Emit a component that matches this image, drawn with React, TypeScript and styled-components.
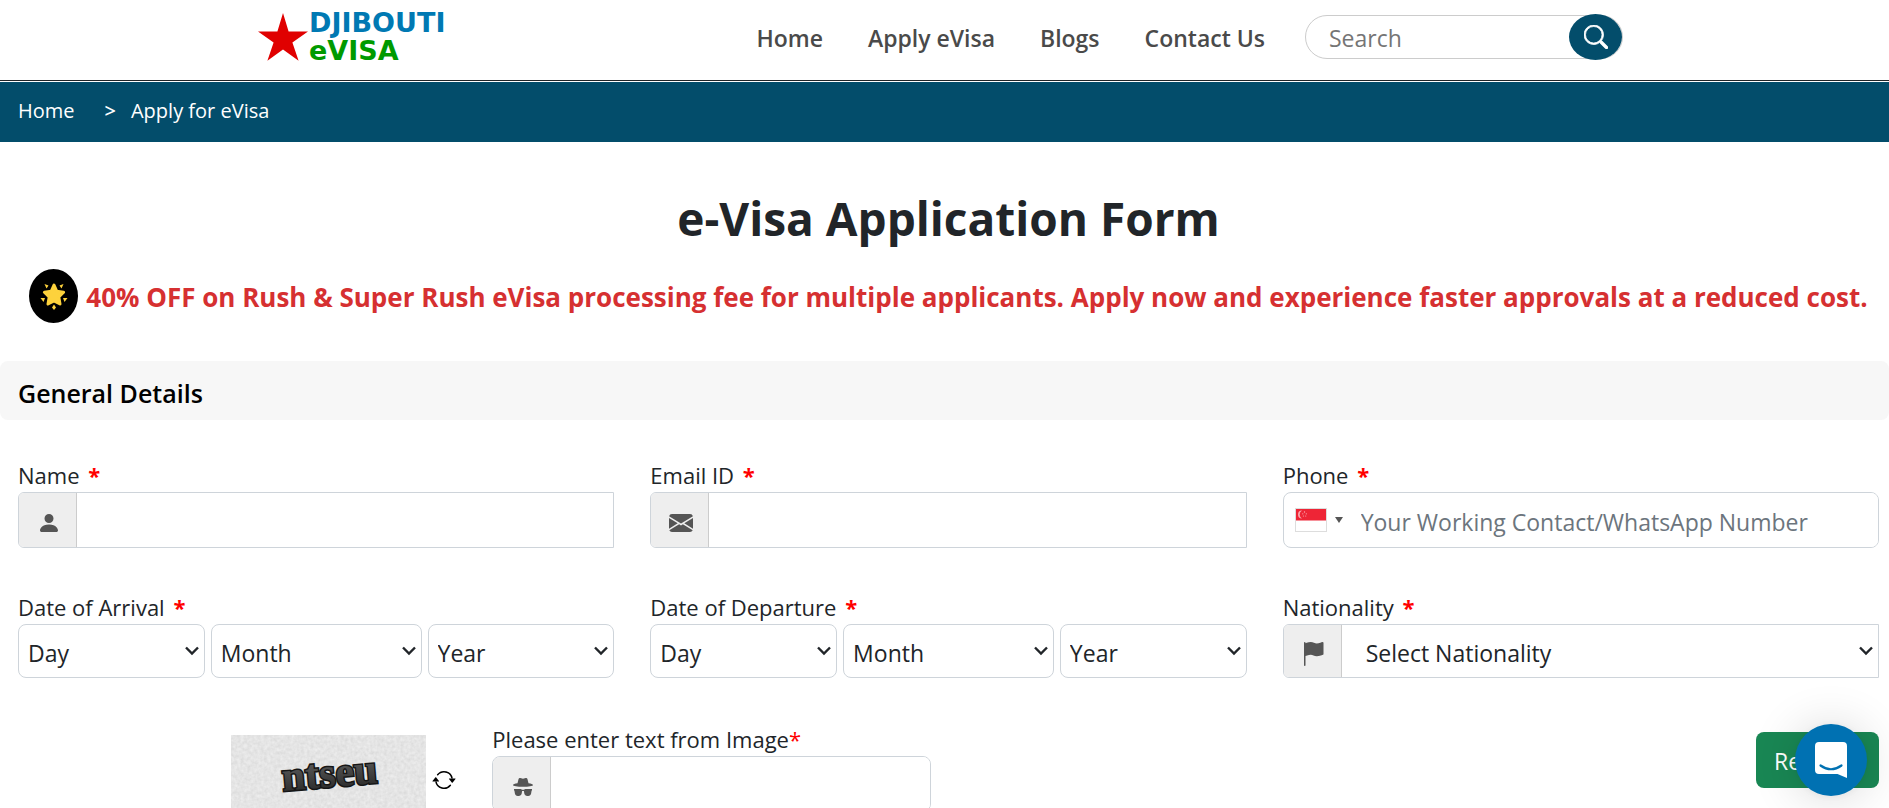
import React from 'react';
import styled, { createGlobalStyle, css } from 'styled-components';
import { BsEnvelopeFill, BsFlagFill, BsSearch } from 'react-icons/bs';

const ink = '#212529';
const brand = '#034d6b';
const line = '#ced4da';

const GlobalStyle = createGlobalStyle`
  *, *::before, *::after { box-sizing: border-box; }
  body {
    margin: 0;
    background: #fff;
    color: ${ink};
    font-family: "Segoe UI", "Open Sans", "Noto Sans", sans-serif;
    font-size: 23px;
    scrollbar-width: none;
  }
  a { color: inherit; text-decoration: none; }
  input, select, button { font: inherit; color: inherit; margin: 0; }
`;

/* ---------- header ---------- */

const Header = styled.header`
  border-bottom: 1px solid #212529;
  padding-bottom: 6px;
  margin-bottom: 1px;
`;

const HeaderInner = styled.div`
  max-width: 1373px;
  min-height: 74px;
  margin: 0 auto;
  padding-right: 8px;
  display: flex;
  align-items: center;
`;

const Logo = styled.a`
  display: flex;
  align-items: center;
  gap: 1px;
`;

const LogoWords = styled.span`
  display: flex;
  flex-direction: column;
  font-family: Verdana, "DejaVu Sans", sans-serif;
  font-weight: 700;
  font-size: 27px;
  line-height: 28px;
  color: #0079b3;
`;

const LogoGreen = styled.span`
  color: #009a00;
`;

const Nav = styled.nav`
  margin-left: auto;
  margin-right: 40px;
  padding-top: 2px;
  display: flex;
  gap: 45px;
  font-weight: 600;
  color: #4a4a4a;
`;

const SearchForm = styled.form`
  display: flex;
  align-items: center;
  width: 318px;
  height: 44px;
  border: 1px solid #ccc;
  border-radius: 22px;
`;

const SearchInput = styled.input`
  flex: 1;
  min-width: 0;
  border: 0;
  outline: 0;
  background: none;
  padding: 2px 0 0 23px;
  &::placeholder { color: #757575; opacity: 1; }
`;

const SearchButton = styled.button`
  flex: none;
  display: grid;
  place-items: center;
  width: 53px;
  height: 46px;
  border: 0;
  border-radius: 50%;
  background: ${brand};
  color: #fff;
`;

const Breadcrumb = styled.nav`
  display: flex;
  background: ${brand};
  color: #fff;
  font-size: 20px;
  line-height: 58px;
  padding: 0 18px 2px;
`;

const Separator = styled.span`
  padding: 0 15px 0 30px;
  font-weight: 600;
`;

/* ---------- intro ---------- */

const Intro = styled.section`
  padding: 44px 10px 38px 18px;
  text-align: center;
`;

const Title = styled.h1`
  margin: 0 0 19px;
  font-size: 46px;
  line-height: 64px;
  font-weight: 700;
`;

const Promo = styled.p`
  margin: 0;
  display: flex;
  justify-content: center;
  align-items: center;
  gap: 8px;
  font-size: 26px;
  line-height: 52px;
  font-weight: 700;
  color: #d63031;
`;

const PromoText = styled.span`
  padding-top: 2px;
`;

const Badge = styled.span`
  flex: none;
  display: grid;
  place-items: center;
  width: 49px;
  height: 54px;
  border-radius: 50%;
  background: #000;
`;

/* ---------- form ---------- */

const SectionTitle = styled.h2`
  margin: 0;
  padding: 5px 18px 0;
  border-radius: 8px;
  background: #f7f7f7;
  color: #000;
  font-size: 25px;
  line-height: 54px;
  font-weight: 600;
`;

const Form = styled.form`
  padding: 38px 10px 0 18px;
  display: grid;
  gap: 42px;
`;

const Row = styled.div<{ $columns: number }>`
  display: grid;
  grid-template-columns: repeat(${p => p.$columns}, minmax(0, 1fr));
  column-gap: 36px;
  min-height: 90px;
`;

const Field = styled.div`
  display: flex;
  flex-direction: column;
`;

const DateFields = styled.fieldset`
  border: 0;
  margin: 0;
  padding: 0;
  min-width: 0;
`;

const labelText = css`
  display: block;
  padding: 0;
  font-size: 22px;
  line-height: 34px;
`;

const Label = styled.label`${labelText}`;
const Legend = styled.legend`${labelText}`;

const Star = styled.span<{ $bold?: boolean }>`
  color: #f00;
  font-weight: ${p => (p.$bold ? 700 : 400)};
  margin-left: ${p => (p.$bold ? 3 : 0)}px;
`;

const Group = styled.div<{ $height: number; $round?: boolean }>`
  display: flex;
  height: ${p => p.$height}px;
  border: 1px solid ${line};
  border-radius: ${p => (p.$round ? '8px' : '6px 0 0 6px')};
  overflow: hidden;
`;

const Addon = styled.span`
  flex: none;
  display: grid;
  place-items: center;
  width: 58px;
  padding: 6px 0 0 2px;
  border-right: 1px solid #ccc;
  background: #eee;
  color: #555;
`;

const TextInput = styled.input`
  flex: 1;
  min-width: 0;
  border: 0;
  outline: 0;
  padding: 3px 18px 0;
  background: #fff;
  &::placeholder { color: #6c757d; opacity: 1; }
`;

const CountryButton = styled.button`
  display: flex;
  align-items: center;
  gap: 8px;
  padding: 0 0 0 11px;
  border: 0;
  background: none;
  color: #555;
`;

const DateRow = styled.div`
  display: grid;
  grid-template-columns: 187fr 211fr 187fr;
  gap: 6px;
`;

const SelectBox = styled.div<{ $bare?: boolean }>`
  flex: 1;
  display: grid;
  align-items: center;
  height: ${p => (p.$bare ? '100%' : '54px')};
  border: ${p => (p.$bare ? '0' : `1px solid ${line}`)};
  border-radius: 8px;
  & > * { grid-area: 1 / 1; }
  & > svg { justify-self: end; margin-right: 5px; pointer-events: none; }
`;

const Select = styled.select<{ $indent: number }>`
  appearance: none;
  width: 100%;
  height: 100%;
  border: 0;
  outline: 0;
  background: none;
  padding: 3px 24px 0 ${p => p.$indent}px;
`;

const Captcha = styled.div`
  display: flex;
  justify-content: flex-end;
  align-items: center;
  align-self: start;
  gap: 6px;
  padding-top: 13px;
`;

const PlainButton = styled.button`
  display: flex;
  padding: 0;
  border: 0;
  background: none;
`;

const Submit = styled.button`
  grid-column: 4;
  justify-self: end;
  align-self: start;
  height: 56px;
  margin-top: 10px;
  padding: 2px 18px 0;
  border: 0;
  border-radius: 8px;
  background: #198754;
  color: #fff;
`;

const ChatButton = styled.button`
  position: fixed;
  right: 22px;
  bottom: 12px;
  display: grid;
  place-items: center;
  width: 72px;
  height: 72px;
  padding: 0;
  border: 0;
  border-radius: 50%;
  background: #0071b2;
  box-shadow: 0 1px 9px rgba(0, 0, 0, 0.06), 0 2px 48px rgba(0, 0, 0, 0.16);
`;

/* ---------- drawings ---------- */

const RedStar = () => (
  <svg width="50" height="50" viewBox="0 0 50 50" aria-hidden="true">
    <path fill="#e00000" d="M25 1l5.6 18.4H50L34.4 30.4l6.2 18.4L25 37.4 9.4 48.8l6.2-18.4L0 19.4h19.4z" />
  </svg>
);

const GlowingStar = () => (
  <svg width="28" height="28" viewBox="0 0 28 28" fill="#fdd23c" aria-hidden="true">
    <path
      stroke="#fdd23c"
      strokeWidth="3"
      strokeLinejoin="round"
      d="M14 3l2.8 6.300 6.800.900-4.800 4.800 1.200 7L14 19l-6 3 1.200-7-4.800-4.800 6.800-.900z"
    />
    <path d="M4.500 2l4 1.500-2 3zM23.500 2l-4 1.500 2 3zM.5 16l4.500 0-1.500 4zM27.500 16h-4.500l1.500 4zM14 22.500l2 3-2 2.500-2-2.500z" />
  </svg>
);

const Person = () => (
  <svg width="24" height="24" viewBox="0 0 16 16" fill="currentColor" aria-hidden="true">
    <path d="M3 14s-1 0-1-1 1-4 6-4 6 3 6 4-1 1-1 1H3zm5-6a3 3 0 1 0 0-6 3 3 0 0 0 0 6z" />
  </svg>
);

const HatAndGlasses = () => (
  <svg width="20" height="18" viewBox="0 0 20 18" fill="currentColor" aria-hidden="true">
    <path d="M5.500 1.200C5.700.3 6.400-.1 7.300.1L10 .7l2.700-.6c.9-.2 1.600.2 1.800 1.100l1 4.100c2.700.4 4.500 1 4.500 1.600C20 8 15.500 8.800 10 8.800S0 8 0 6.900c0-.6 1.800-1.200 4.500-1.600z" />
    <path d="M1 11h6.600c.6 0 1 .2 1.300.7h2.200c.3-.5.7-.7 1.300-.7H19v1.500h-.4l-.5 3c-.3 1.500-1.300 2.500-2.800 2.500h-1c-1.600 0-2.700-1-3-2.500l-.4-2.400H9.100l-.4 2.400c-.3 1.500-1.400 2.500-3 2.500h-1c-1.500 0-2.500-1-2.800-2.500l-.5-3H1z" />
  </svg>
);

const Chevron = () => (
  <svg width="14" height="10" viewBox="0 0 14 10" fill="none" stroke={ink} strokeWidth="2.4" aria-hidden="true">
    <path d="M1 1.500l6 6 6-6" />
  </svg>
);

const SingaporeFlag = () => (
  <svg width="32" height="24" viewBox="0 0 32 24" aria-hidden="true">
    <rect x=".5" y=".5" width="31" height="23" fill="#fff" stroke="#ddd" />
    <rect x="1" y="1" width="30" height="11.500" fill="#ee2536" />
    <g fill="#fff" opacity=".6">
      <path d="M7 2.500a4 4 0 1 0 0 8 4.600 4.600 0 0 1 0-8z" />
      <circle cx="9.500" cy="4" r=".7" />
      <circle cx="7.800" cy="5.800" r=".6" />
      <circle cx="11.300" cy="5.800" r=".6" />
      <circle cx="8.400" cy="8" r=".6" />
      <circle cx="10.700" cy="8" r=".6" />
    </g>
  </svg>
);

const Caret = () => (
  <svg width="8" height="6" viewBox="0 0 8 6" fill="currentColor" aria-hidden="true">
    <path d="M0 0h8L4 6z" />
  </svg>
);

const Refresh = () => (
  <svg width="24" height="24" viewBox="0 0 16 16" fill="#000" aria-hidden="true">
    <path d="M11.534 7h3.932a.25.25 0 0 1 .192.410l-1.966 2.360a.25.25 0 0 1-.384 0l-1.966-2.360a.25.25 0 0 1 .192-.410zm-11 2h3.932a.25.25 0 0 0 .192-.410L2.692 6.230a.25.25 0 0 0-.384 0L.342 8.590A.25.25 0 0 0 .534 9z" />
    <path fillRule="evenodd" d="M8 3c-1.552 0-2.940.707-3.857 1.818a.5.5 0 1 1-.771-.636A6.002 6.002 0 0 1 13.917 7H12.900A5.002 5.002 0 0 0 8 3zM3.100 9a5.002 5.002 0 0 0 8.757 2.182.5.5 0 1 1 .771.636A6.002 6.002 0 0 1 2.083 9H3.100z" />
  </svg>
);

const CaptchaImage = () => (
  <svg width="195" height="90" viewBox="0 0 195 90" role="img" aria-label="Captcha">
    <defs>
      <filter id="grain" x="0" y="0" width="100%" height="100%">
        <feTurbulence type="fractalNoise" baseFrequency=".3" numOctaves="2" seed="4" />
        <feColorMatrix values=".2 0 0 0 .68  .2 0 0 0 .68  .2 0 0 0 .68  0 0 0 0 1" />
      </filter>
      <linearGradient id="inkFade" x1="0" y1="0" x2="0" y2="1">
        <stop offset=".3" stopColor="#555" />
        <stop offset="1" stopColor="#222" />
      </linearGradient>
    </defs>
    <rect width="195" height="90" fill="#dcdcdc" filter="url(#grain)" />
    <g
      transform="rotate(-5 98 45)"
      fontFamily="'Liberation Serif', serif"
      fontWeight="700"
      fontSize="42"
      textAnchor="middle"
    >
      <text x="99" y="52" fill="url(#inkFade)" stroke="#161616" strokeWidth="3" paintOrder="stroke">ntseu</text>
    </g>
  </svg>
);

const ChatGlyph = () => (
  <svg width="32" height="36" viewBox="0 0 32 36" aria-hidden="true">
    <path fill="#fff" d="M4 0h24a4 4 0 0 1 4 4v32l-9.500-4H4a4 4 0 0 1-4-4V4a4 4 0 0 1 4-4z" />
    <path fill="none" stroke="#0071b2" strokeWidth="2.2" strokeLinecap="round" d="M5.500 23.500q10.500 7.500 21 0" />
  </svg>
);

/* ---------- parts ---------- */

function Dropdown({ label, text, indent = 9, bare, id }: {
  label?: string; text: string; indent?: number; bare?: boolean; id?: string;
}) {
  return (
    <SelectBox $bare={bare}>
      <Select id={id} aria-label={label} $indent={indent}>
        <option>{text}</option>
      </Select>
      <Chevron />
    </SelectBox>
  );
}

function DateField({ title }: { title: string }) {
  return (
    <DateFields>
      <Legend>{title} <Star $bold>*</Star></Legend>
      <DateRow>
        {['Day', 'Month', 'Year'].map(part => (
          <Dropdown key={part} label={`${title}: ${part}`} text={part} />
        ))}
      </DateRow>
    </DateFields>
  );
}

export default function App() {
  return (
    <>
      <GlobalStyle />
      <Header>
        <HeaderInner>
          <Logo href="#">
            <RedStar />
            <LogoWords>
              <span>DJIBOUTI</span>
              <LogoGreen>eVISA</LogoGreen>
            </LogoWords>
          </Logo>
          <Nav>
            <a href="#">Home</a>
            <a href="#">Apply eVisa</a>
            <a href="#">Blogs</a>
            <a href="#">Contact Us</a>
          </Nav>
          <SearchForm>
            <SearchInput type="text" placeholder="Search" aria-label="Search" />
            <SearchButton type="button" aria-label="Submit search">
              <BsSearch size={24} stroke="#fff" strokeWidth={0.5} />
            </SearchButton>
          </SearchForm>
        </HeaderInner>
      </Header>
      <Breadcrumb aria-label="Breadcrumb">
        <a href="#">Home</a>
        <Separator>&gt;</Separator>
        <a href="#">Apply for eVisa</a>
      </Breadcrumb>
      <main>
        <Intro>
          <Title>e-Visa Application Form</Title>
          <Promo>
            <Badge><GlowingStar /></Badge>
            <PromoText>
              40% OFF on Rush &amp; Super Rush eVisa processing fee for multiple applicants. Apply now and
              experience faster approvals at a reduced cost.
            </PromoText>
          </Promo>
        </Intro>
        <SectionTitle>General Details</SectionTitle>
        <Form>
          <Row $columns={3}>
            <Field>
              <Label htmlFor="name">Name <Star $bold>*</Star></Label>
              <Group $height={56}>
                <Addon><Person /></Addon>
                <TextInput id="name" type="text" />
              </Group>
            </Field>
            <Field>
              <Label htmlFor="email">Email ID <Star $bold>*</Star></Label>
              <Group $height={56}>
                <Addon><BsEnvelopeFill size={24} /></Addon>
                <TextInput id="email" type="email" />
              </Group>
            </Field>
            <Field>
              <Label htmlFor="phone">Phone <Star $bold>*</Star></Label>
              <Group $height={56} $round>
                <CountryButton type="button" aria-label="Country code: Singapore">
                  <SingaporeFlag />
                  <Caret />
                </CountryButton>
                <TextInput id="phone" type="tel" placeholder="Your Working Contact/WhatsApp Number" />
              </Group>
            </Field>
          </Row>
          <Row $columns={3}>
            <DateField title="Date of Arrival" />
            <DateField title="Date of Departure" />
            <Field>
              <Label htmlFor="nationality">Nationality <Star $bold>*</Star></Label>
              <Group $height={54}>
                <Addon><BsFlagFill size={24} /></Addon>
                <Dropdown id="nationality" text="Select Nationality" indent={24} bare />
              </Group>
            </Field>
          </Row>
          <Row $columns={4}>
            <Captcha>
              <CaptchaImage />
              <PlainButton type="button" aria-label="Refresh image"><Refresh /></PlainButton>
            </Captcha>
            <Field>
              <Label htmlFor="captcha">Please enter text from Image<Star>*</Star></Label>
              <Group $height={56} $round>
                <Addon><HatAndGlasses /></Addon>
                <TextInput id="captcha" type="text" />
              </Group>
            </Field>
            <Submit type="button">Register</Submit>
          </Row>
        </Form>
      </main>
      <ChatButton type="button" aria-label="Open chat"><ChatGlyph /></ChatButton>
    </>
  );
}
